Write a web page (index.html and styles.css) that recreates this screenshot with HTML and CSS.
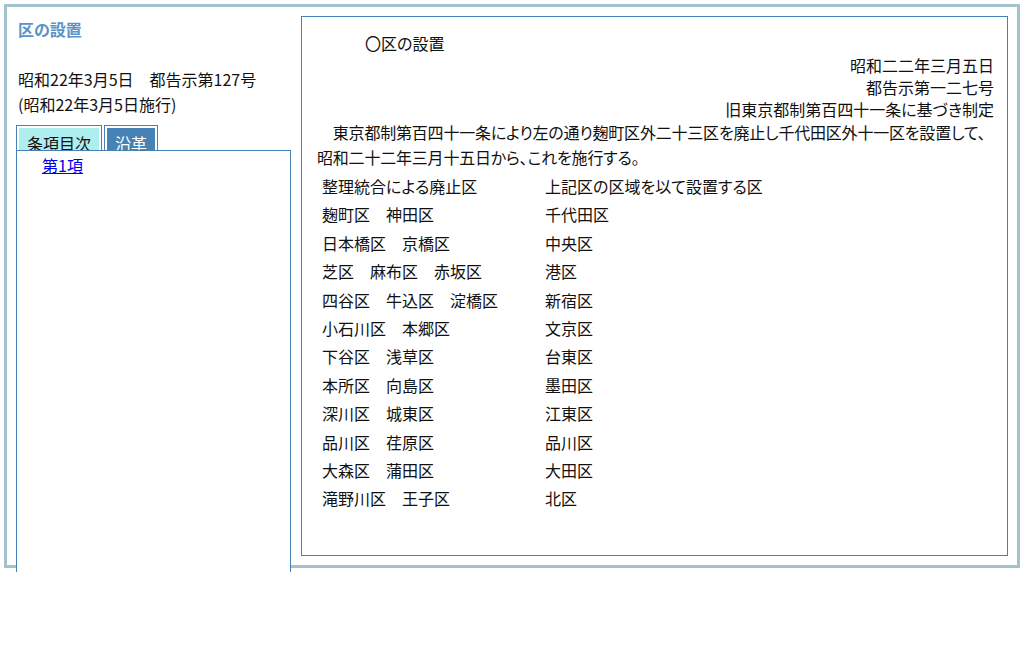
FILE: index.html
```html
<!DOCTYPE html>
<html lang="ja">
<head>
<meta charset="utf-8">
<title>区の設置</title>
<link rel="stylesheet" href="styles.css">
</head>
<body>
<div class="frame">
  <div class="side">
    <div class="title">区の設置</div>
    <div class="meta">
      <div>昭和22年3月5日　都告示第127号</div>
      <div>(昭和22年3月5日施行)</div>
    </div>
    <div class="tabs">
      <div class="tab tab-toc">条項目次</div>
      <div class="tab tab-hist">沿革</div>
    </div>
    <div class="toc">
      <a href="#p1" class="toc-link">第1項</a>
    </div>
  </div>
  <div class="doc">
    <div class="doc-title">〇区の設置</div>
    <div class="doc-right">昭和二二年三月五日</div>
    <div class="doc-right">都告示第一二七号</div>
    <div class="doc-right">旧東京都制第百四十一条に基づき制定</div>
    <p class="doc-para" id="p1">　東京都制第百四十一条により左の通り麹町区外二十三区を廃止し千代田区外十一区を設置して、昭和二十二年三月十五日から、これを施行する。</p>
    <table class="wards">
      <tr><td class="c1">整理統合による廃止区</td><td>上記区の区域を以て設置する区</td></tr>
      <tr><td class="c1">麹町区　神田区</td><td>千代田区</td></tr>
      <tr><td class="c1">日本橋区　京橋区</td><td>中央区</td></tr>
      <tr><td class="c1">芝区　麻布区　赤坂区</td><td>港区</td></tr>
      <tr><td class="c1">四谷区　牛込区　淀橋区</td><td>新宿区</td></tr>
      <tr><td class="c1">小石川区　本郷区</td><td>文京区</td></tr>
      <tr><td class="c1">下谷区　浅草区</td><td>台東区</td></tr>
      <tr><td class="c1">本所区　向島区</td><td>墨田区</td></tr>
      <tr><td class="c1">深川区　城東区</td><td>江東区</td></tr>
      <tr><td class="c1">品川区　荏原区</td><td>品川区</td></tr>
      <tr><td class="c1">大森区　蒲田区</td><td>大田区</td></tr>
      <tr><td class="c1">滝野川区　王子区</td><td>北区</td></tr>
    </table>
  </div>
</div>
</body>
</html>
```

FILE: styles.css
```css
html, body {
  margin: 0;
  padding: 0;
  background: #ffffff;
}
body {
  font-family: "Noto Sans CJK JP", "Noto Sans", sans-serif;
  font-size: 16px;
  font-feature-settings: "palt";
  color: #111111;
}
.frame {
  margin: 4px;
  width: 1016px;
  box-sizing: border-box;
  border: 3px solid #a3c3cc;
  padding: 9px;
  display: flex;
  gap: 10px;
  align-items: flex-start;
}
.side {
  width: 275px;
  flex: none;
  height: 540px;
}
.title {
  margin-top: 2px;
  line-height: 22px;
  font-weight: bold;
  color: #5a93c9;
  padding-left: 2px;
}
.meta {
  margin-top: 27px;
  line-height: 25px;
  padding-left: 2px;
}
.tabs {
  margin-top: 8px;
  display: flex;
  gap: 2px;
  height: 25px;
  overflow: hidden;
}
.tab {
  box-sizing: border-box;
  border: 1px solid #4682b4;
  box-shadow: inset 0 0 0 2px #ffffff;
  height: 34px;
  line-height: 34px;
  text-align: center;
  flex: none;
}
.tab-toc {
  width: 86px;
  background: #afeeee;
  color: #111111;
}
.tab-hist {
  width: 54px;
  background: #4682b4;
  color: #ffffff;
}
.toc {
  height: 427px;
  box-sizing: border-box;
  border: 1px solid #4682b4;
  background: #ffffff;
  padding: 4px 0 0 25px;
  line-height: 20px;
}
.toc-link {
  color: #0000ee;
  text-decoration: underline;
}
.doc {
  flex: 1;
  height: 540px;
  box-sizing: border-box;
  border: 1px solid #4682b4;
  padding: 15px 13px 0 15px;
}
.doc-title {
  padding-left: 48px;
  line-height: 22px;
}
.doc-right {
  text-align: right;
  line-height: 22px;
}
.doc-para {
  margin: 0;
  line-height: 24.5px;
  letter-spacing: -0.2px;
}
.wards {
  border-collapse: collapse;
  margin-top: 3px;
}
.wards td {
  padding: 4px 5px;
  line-height: 20.4px;
  white-space: nowrap;
}
.wards td.c1 {
  width: 213px;
}
```
